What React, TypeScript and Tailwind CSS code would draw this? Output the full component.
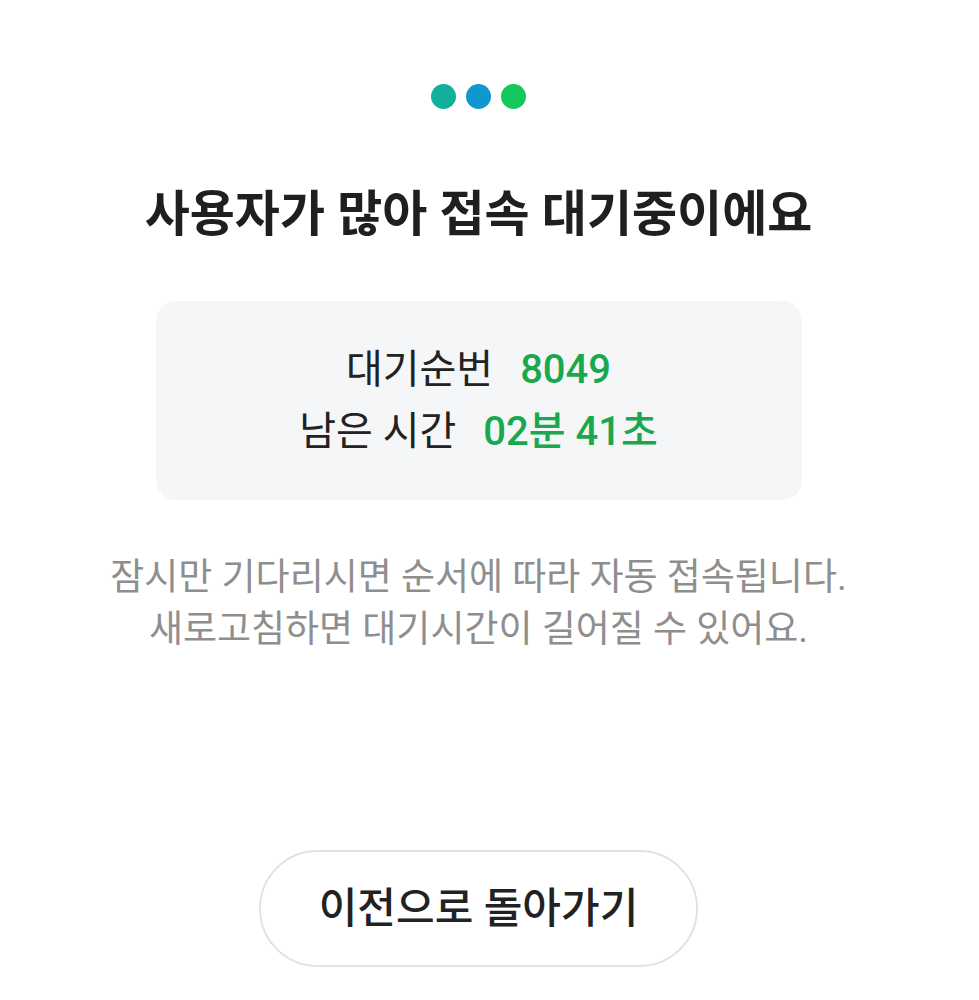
export default function App() {
  const font = { fontFamily: 'Roboto, "Noto Sans CJK KR", sans-serif' };
  return (
    <div style={font} className="min-h-[1000px] w-full bg-white flex flex-col items-center pr-[22px]">
      <div className="flex gap-[10px] mt-[84px]">
        <span className="w-[25px] h-[25px] rounded-full bg-[#12b09a]" />
        <span className="w-[25px] h-[25px] rounded-full bg-[#0f98cf]" />
        <span className="w-[25px] h-[25px] rounded-full bg-[#13c75d]" />
      </div>

      <h1 className="mt-[76px] text-[49px] leading-[60px] font-bold text-[#1f1f1f]">
        사용자가 많아 접속 대기중이에요
      </h1>

      <div className="mt-[56px] w-[646px] h-[199px] rounded-[20px] bg-[#f5f6f8] flex flex-col items-center justify-center gap-[8px]">
        <div className="flex items-baseline gap-[27px] text-[40px] leading-[54px]">
          <span className="text-[#222]">대기순번</span>
          <span className="text-[#19a84e] font-medium">8049</span>
        </div>
        <div className="flex items-baseline gap-[27px] text-[40px] leading-[54px]">
          <span className="text-[#222]">남은 시간</span>
          <span className="text-[#19a84e] font-medium">02분 41초</span>
        </div>
      </div>

      <div className="mt-[52px] text-center text-[37px] leading-[52px] text-[#8e8e8e]">
        <p>잠시만 기다리시면 순서에 따라 자동 접속됩니다.</p>
        <p>새로고침하면 대기시간이 길어질 수 있어요.</p>
      </div>

      <button className="mt-[194px] w-[439px] h-[117px] rounded-full border-2 border-[#e2e2e2] bg-white text-[42px] font-medium text-[#222]">
        이전으로 돌아가기
      </button>
    </div>
  );
}
